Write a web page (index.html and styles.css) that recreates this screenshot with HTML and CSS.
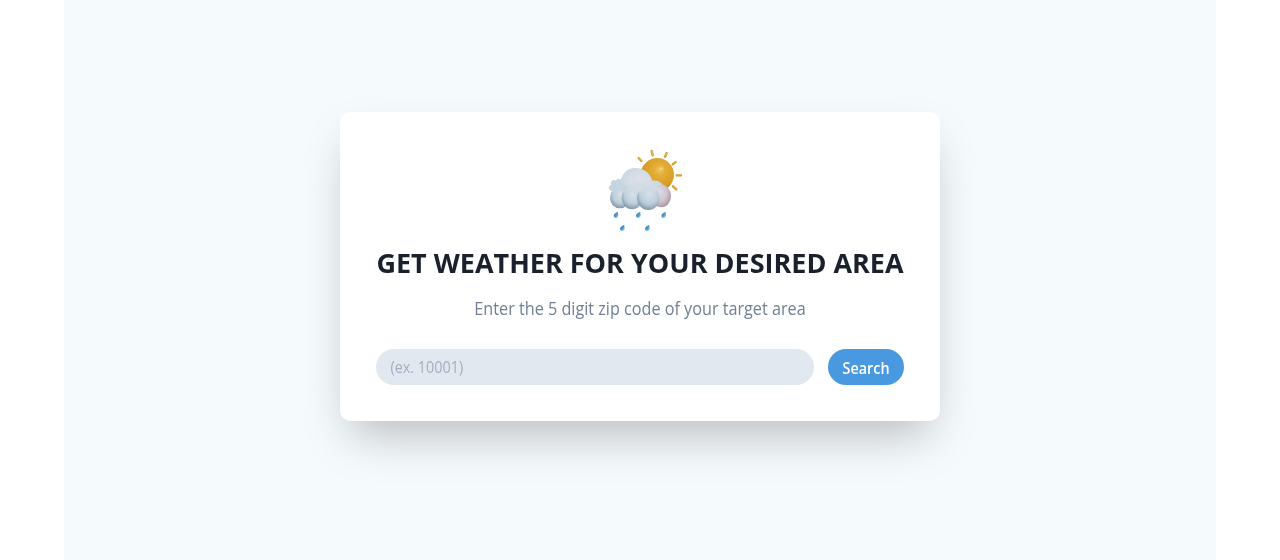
FILE: index.html
```html
<!DOCTYPE html>
<html lang="en">
<head>
<meta charset="utf-8">
<title>Weather</title>
<link rel="stylesheet" href="styles.css">
</head>
<body>
<main class="page">
<section class="card">
<svg class="logo" viewBox="-15 24 270 270" aria-hidden="true">
<defs>
<radialGradient id="sun" cx=".58" cy=".36" r=".68"><stop offset="0" stop-color="#efc762"/><stop offset=".25" stop-color="#e3ae38"/><stop offset=".72" stop-color="#d79d24"/><stop offset="1" stop-color="#a56f12"/></radialGradient>
<radialGradient id="top" cx=".46" cy=".35" r=".75"><stop offset="0" stop-color="#dfe2ec"/><stop offset=".65" stop-color="#cad6e0"/><stop offset="1" stop-color="#a3b8c6"/></radialGradient>
<radialGradient id="puff" cx=".55" cy=".35" r=".68"><stop offset="0" stop-color="#d9e0e8"/><stop offset=".6" stop-color="#bccedb"/><stop offset="1" stop-color="#7990a5"/></radialGradient>
<radialGradient id="pink" cx=".38" cy=".35" r=".7"><stop offset="0" stop-color="#dcdee7"/><stop offset=".6" stop-color="#cfc4ce"/><stop offset="1" stop-color="#a68f9a"/></radialGradient>
<linearGradient id="rain" x2="1" y2="1"><stop offset="0" stop-color="#2b6fae"/><stop offset=".6" stop-color="#4f9ed3"/><stop offset="1" stop-color="#b3e0f4"/></linearGradient>
<filter id="soft" x="-20%" y="-20%" width="140%" height="140%"><feGaussianBlur stdDeviation="3"/></filter>
<path id="drop" d="M6-9C1-7-7-3-7 3c0 8 13 8 14 0 1-4-2-7-1-12z"/>
</defs>
<g class="rays"><path d="M116 54l8 9M155 33l3 13M200 39l-5 11M227 66l-9 7M230 106h13M219 139l10 9"/></g>
<g class="ray-lights"><path d="M117 53l7 8M156 33l2 10M200 39l-4 8M226 65l-7 5M231 105h10M221 138l8 7"/></g>
<circle cx="172" cy="104" r="50" fill="url(#sun)"/>
<ellipse cx="184" cy="86" rx="6" ry="4" fill="#f8dc91" opacity=".65"/>
<path d="M60 142c0-37 19-58 46-58 27 0 46 18 51 38 16-1 27 4 33 14l-10 45-30 17H67z" fill="url(#top)"/>
<ellipse cx="60" cy="173" rx="30" ry="32" fill="url(#puff)"/>
<ellipse cx="184" cy="168" rx="29" ry="34" fill="url(#pink)"/>
<ellipse cx="96" cy="174" rx="31" ry="34" fill="url(#puff)"/>
<ellipse cx="145" cy="174" rx="34" ry="36" fill="url(#puff)"/>
<path d="M66 140c13-17 75-23 112-2l-10 17c-20-9-41-5-48 7-10-9-31-13-48-5z" fill="#d2dce5" opacity=".85" filter="url(#soft)"/>
<path d="M37 154c-11-2-14-15-4-20-3-11 8-18 15-12 5-10 18-5 16 5 8-1 11 4 10 9 11 1 12 14 1 15-5 3-10 1-14-2-2 5-8 7-11 1-3 7-10 9-13 4z" fill="#c5d5df"/>
<g fill="url(#rain)"><use href="#drop" x="48" y="224"/><use href="#drop" x="115" y="224"/><use href="#drop" x="191" y="224"/><use href="#drop" x="67" y="263"/><use href="#drop" x="142" y="263"/></g>
</svg>
<h1 class="title">GET WEATHER FOR YOUR DESIRED AREA</h1>
<p class="subtitle">Enter the 5 digit zip code of your target area</p>
<form class="search">
<label class="field"><input class="zip" type="text" placeholder="(ex. 10001)" aria-label="Zip code"></label>
<button class="submit" type="button"><span class="submit-text">Search</span></button>
</form>
</section>
</main>
</body>
</html>
```
FILE: styles.css
```css
* { box-sizing: border-box; }
body { margin: 0; background: #fff; font-family: "Open Sans", "Noto Sans", sans-serif; }
.page { width: 1152px; height: 560px; margin: 0 auto; padding-top: 112px; background: #f5fafd; display: flex; justify-content: center; align-items: flex-start; overflow: hidden; }
.card { width: 600px; height: 309px; padding: 36px; border-radius: 10.8px; background: #fff; box-shadow: 0 22.5px 45px -10.8px rgba(0, 0, 0, .26); display: flex; flex-direction: column; align-items: center; }
.logo { width: 90px; height: 90px; flex: none; }
.rays, .ray-lights { fill: none; stroke: #d09a30; stroke-width: 7; stroke-linecap: round; }
.ray-lights { stroke: #e6b650; stroke-width: 3.5; }
.title { margin: 7px 0 0; font-size: 27px; line-height: 36px; font-weight: 700; color: #1a202c; white-space: nowrap; transform: scaleY(1.01); }
.subtitle { margin: 16px 0 0; font-size: 16.2px; line-height: 25px; color: #718096; transform: scaleY(1.08); }
.search { width: 100%; margin: 27px 0 0; display: flex; gap: 14.4px; }
.field { flex: 1; min-width: 0; height: 36px; display: flex; border-radius: 18px; background: #e2e8f0; }
.zip { width: 100%; height: 36px; padding: 1px 14.4px 0; border: 0; background: transparent; color: #1a202c; font: 14.4px "Open Sans", sans-serif; outline: 0; transform: scaleY(1.08); }
.zip::placeholder { color: #a5aec0; opacity: 1; }
.submit { width: 76px; height: 36px; padding: 2px 0 0; border: 0; border-radius: 18px; background: #4999e0; color: #fff; font: 600 14.4px "Open Sans", sans-serif; }
.submit-text { display: inline-block; transform: scaleY(1.07); }
```
